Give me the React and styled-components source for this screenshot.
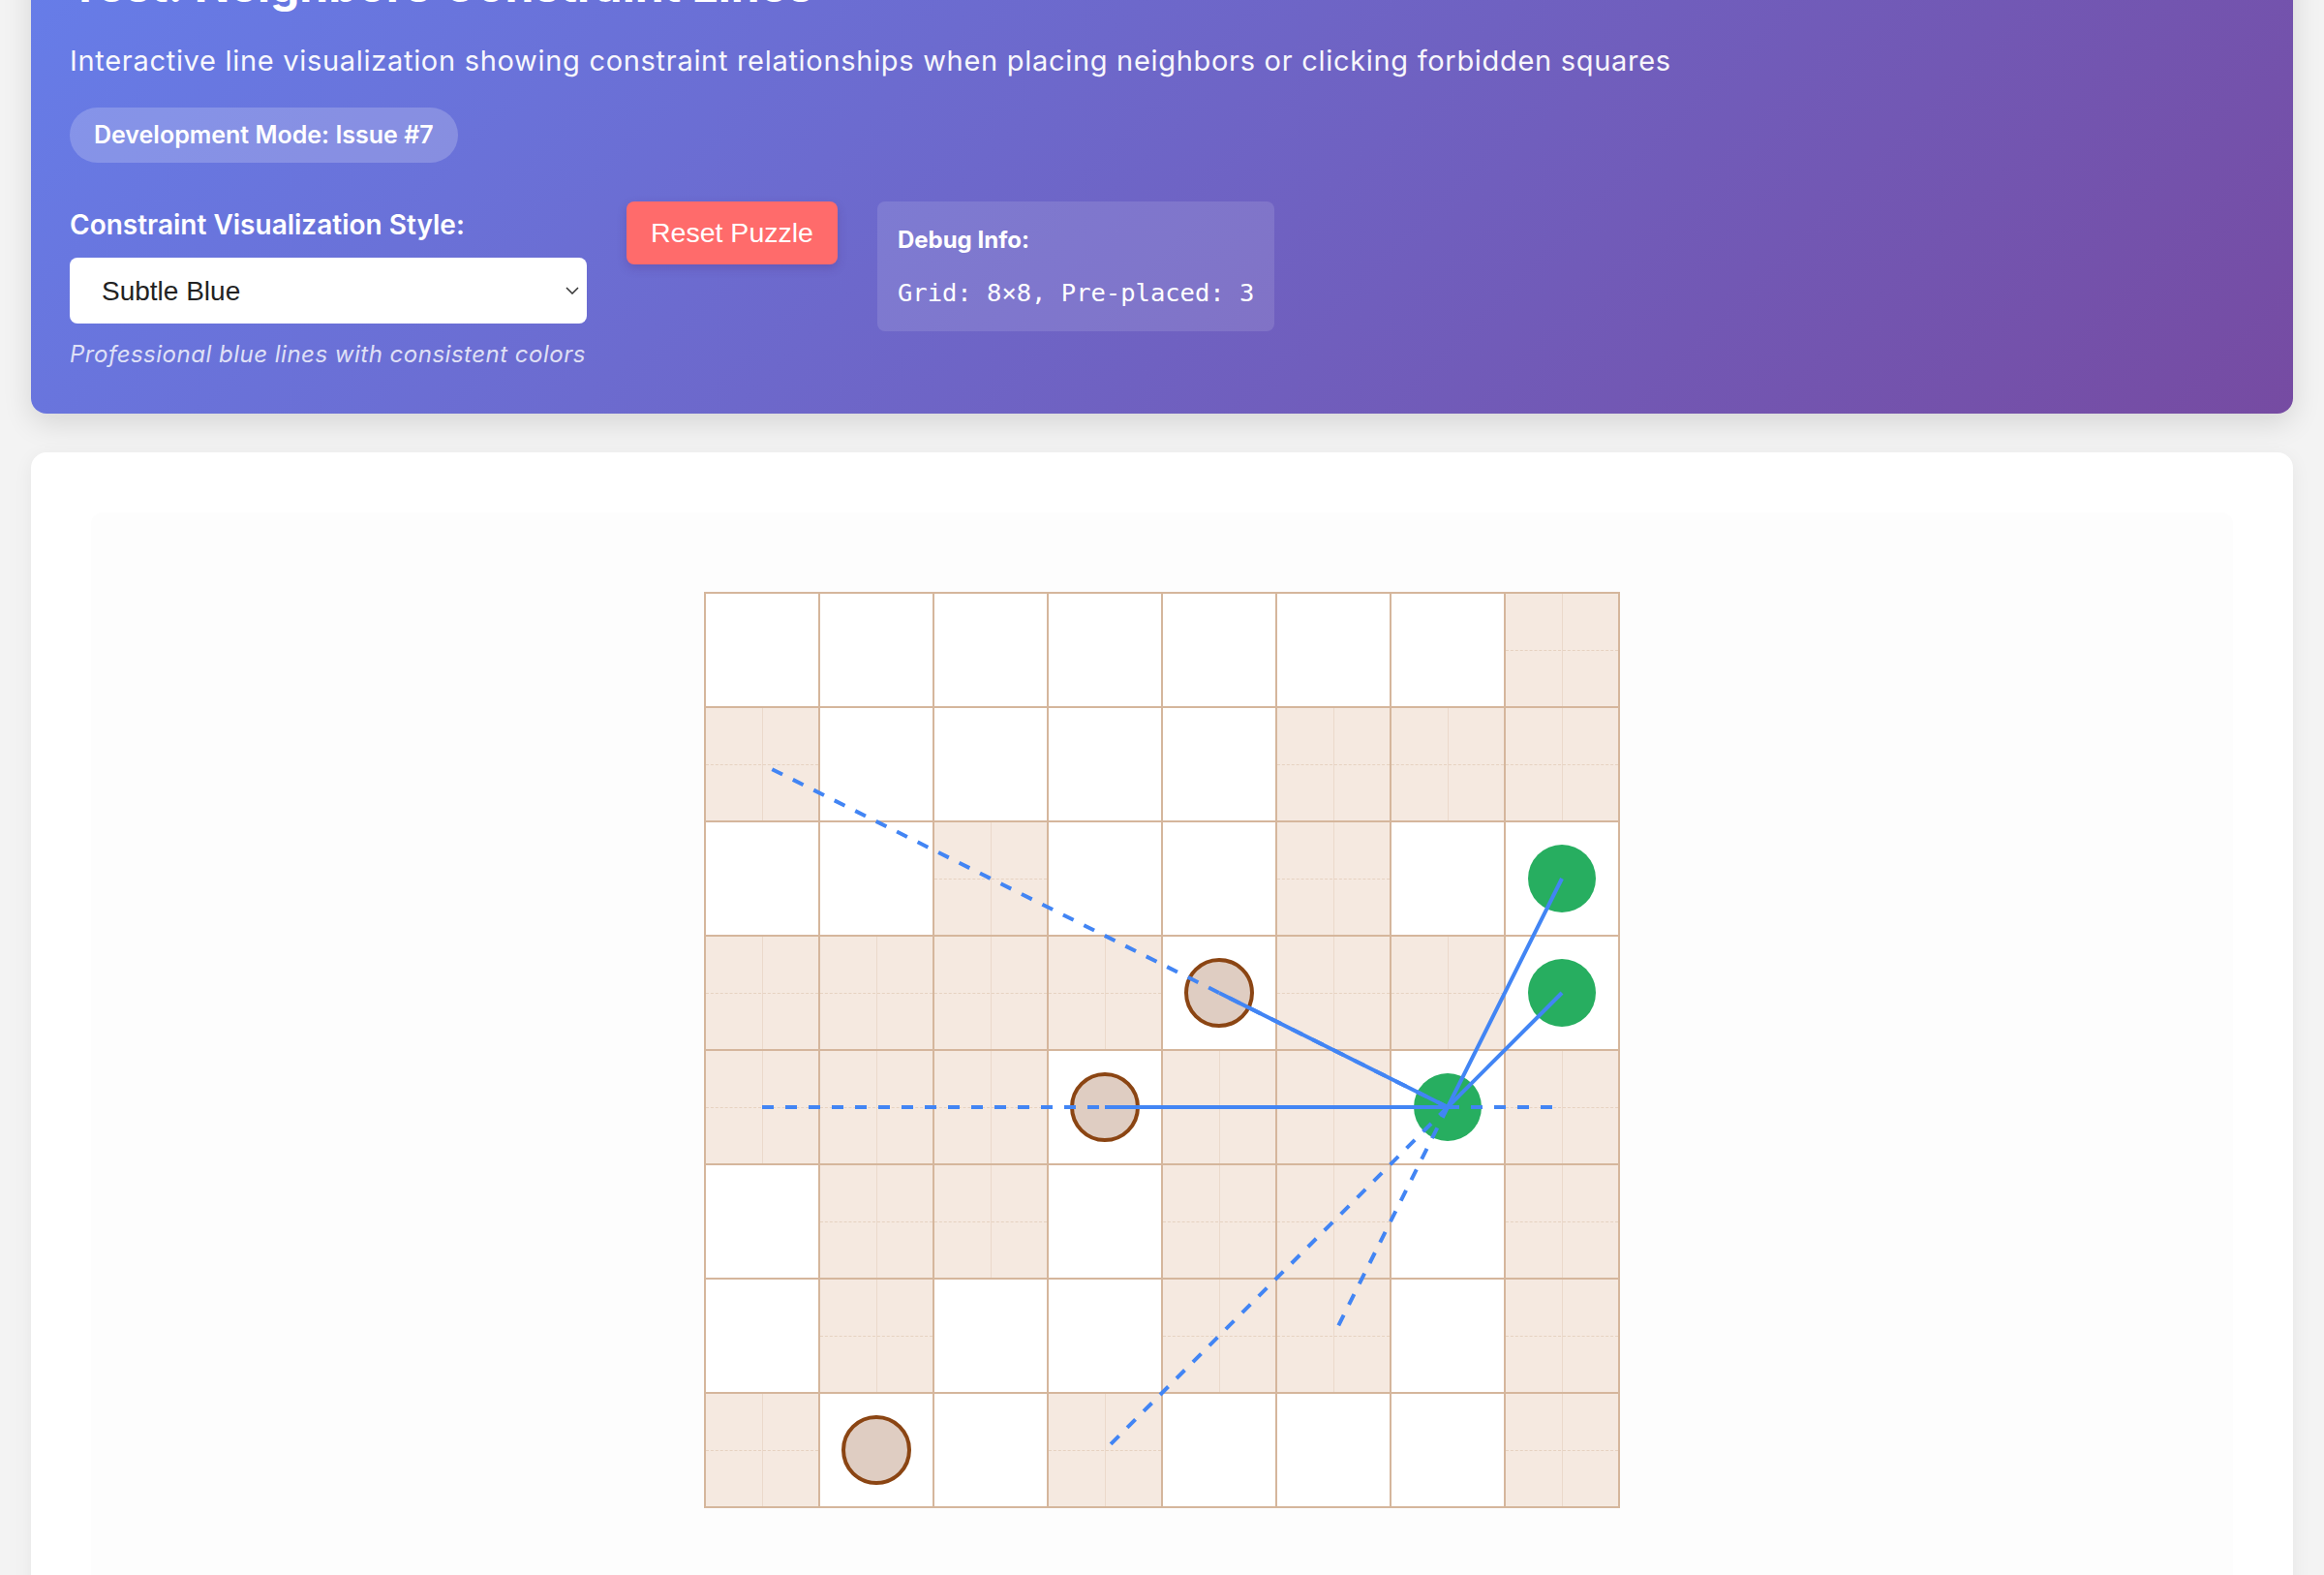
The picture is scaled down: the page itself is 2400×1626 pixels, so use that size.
import React from "react";
import { styled, createGlobalStyle } from "styled-components";

const GlobalStyle = createGlobalStyle`
  body {
    margin: 0;
    background: #f3f3f3;
    font-family: Inter, "Noto Sans", sans-serif;
  }
`;

const Page = styled.div`
  padding: 0 32px 40px;
  margin-top: -84px;
`;

const Header = styled.header`
  background: linear-gradient(135deg, #667eea 0%, #764ba2 100%);
  color: #fff;
  border-radius: 16px;
  padding: 40px 40px 43px;
  box-shadow: 0 10px 30px rgba(0, 0, 0, 0.12);
`;

const Title = styled.h1`
  margin: 0 0 28px;
  font-size: 48px;
  line-height: 1.2;
  font-weight: 700;
`;

const Subtitle = styled.p`
  margin: 0 0 27px;
  font-size: 29px;
  letter-spacing: 0.7px;
  line-height: 42px;
  opacity: 0.95;
`;

const Badge = styled.span`
  display: inline-block;
  padding: 10px 25px;
  border-radius: 999px;
  background: rgba(255, 255, 255, 0.2);
  font-size: 25px;
  font-weight: 600;
  line-height: 1.5;
`;

const Controls = styled.div`
  display: flex;
  align-items: flex-start;
  gap: 41px;
  margin-top: 40px;
`;

const Field = styled.div`
  display: flex;
  flex-direction: column;
  width: 534px;
`;

const Label = styled.label`
  font-size: 28px;
  font-weight: 600;
  line-height: 1.75;
  margin-bottom: 9px;
`;

const SelectWrap = styled.div`
  position: relative;
`;

const Select = styled.select`
  appearance: none;
  width: 100%;
  height: 68px;
  border: none;
  border-radius: 8px;
  background: #fff;
  color: #222;
  padding: 0 60px 0 33px;
  font-family: "Liberation Sans", Arial, sans-serif;
  font-size: 28px;
`;

const Chevron = styled.svg`
  position: absolute;
  right: 8px;
  top: 50%;
  transform: translateY(-50%);
  pointer-events: none;
`;

const Hint = styled.p`
  margin: 14px 0 0;
  font-size: 24px;
  letter-spacing: 0.5px;
  font-style: italic;
  line-height: 1.5;
  color: rgba(255, 255, 255, 0.8);
`;

const ResetButton = styled.button`
  border: none;
  border-radius: 8px;
  background: #ff6b6b;
  color: #fff;
  font-family: "Liberation Sans", Arial, sans-serif;
  font-size: 28.5px;
  line-height: 33px;
  padding: 16px 25px;
  box-shadow: 0 4px 10px rgba(80, 40, 120, 0.25);
`;

const Debug = styled.div`
  background: rgba(255, 255, 255, 0.12);
  border-radius: 8px;
  padding: 22px 21px 21px;
  display: flex;
  flex-direction: column;
  gap: 17px;
`;

const DebugTitle = styled.strong`
  font-size: 24px;
  font-weight: 700;
  line-height: 36px;
`;

const DebugLine = styled.code`
  font-family: "DejaVu Sans Mono", monospace;
  font-size: 25.5px;
  line-height: 38px;
`;

const Card = styled.main`
  margin-top: 40px;
  background: #fff;
  border-radius: 16px;
  padding: 62px;
  box-shadow: 0 4px 20px rgba(0, 0, 0, 0.06);
`;

const BoardArea = styled.section`
  background: #fdfdfd;
  border-radius: 12px;
  padding: 82px 0 120px;
  display: flex;
  justify-content: center;
`;

const Board = styled.div`
  position: relative;
  display: grid;
  grid-template-columns: repeat(8, 116px);
  grid-auto-rows: 116px;
  gap: 2px;
  padding: 2px;
  background: #d5b69c;
`;

const Cell = styled.div`
  position: relative;
  display: flex;
  align-items: center;
  justify-content: center;
  background: ${({ $forbidden }) => ($forbidden ? "#f5e9e0" : "#fff")};

  ${({ $forbidden }) =>
    $forbidden &&
    `
    &::before {
      content: "";
      position: absolute;
      left: 50%;
      top: 0;
      bottom: 0;
      border-left: 1px solid rgba(213, 182, 156, 0.3);
    }
    &::after {
      content: "";
      position: absolute;
      top: 50%;
      left: 0;
      right: 0;
      border-top: 1px dashed rgba(213, 182, 156, 0.45);
    }
  `}
`;

const Piece = styled.div`
  width: ${({ $kind }) => ($kind === "fixed" ? "72px" : "70px")};
  height: ${({ $kind }) => ($kind === "fixed" ? "72px" : "70px")};
  box-sizing: border-box;
  border-radius: 50%;
  position: relative;
  z-index: 1;
  background: ${({ $kind }) => ($kind === "fixed" ? "#dfcdc2" : "#27ae60")};
  border: ${({ $kind }) => ($kind === "fixed" ? "4px solid #8b4513" : "none")};
`;

const Overlay = styled.svg`
  position: absolute;
  inset: 0;
  pointer-events: none;
  z-index: 2;
`;

const forbidden = [
  "00000001",
  "10000111",
  "00100100",
  "11110110",
  "11101101",
  "01101101",
  "01001101",
  "10010001",
];

const pieces = {
  "3-4": "fixed",
  "4-3": "fixed",
  "7-1": "fixed",
  "2-7": "placed",
  "3-7": "placed",
  "4-6": "placed",
};

const center = (r, c) => [60 + 118 * c, 60 + 118 * r];

const origin = [4, 6];
const dashedTo = [
  [1, 0],
  [4, 0],
  [4, 7],
  [6, 5],
  [7, 3],
];
const solidTo = [
  [3, 4],
  [4, 3],
  [2, 7],
  [3, 7],
];

const App = () => {
  const [ox, oy] = center(...origin);
  return (
    <>
      <GlobalStyle />
      <Page>
        <Header>
          <Title>Test: Neighbors Constraint Lines</Title>
          <Subtitle>
            Interactive line visualization showing constraint relationships
            when placing neighbors or clicking forbidden squares
          </Subtitle>
          <Badge>Development Mode: Issue #7</Badge>
          <Controls>
            <Field>
              <Label htmlFor="style">Constraint Visualization Style:</Label>
              <SelectWrap>
                <Select id="style" defaultValue="subtle">
                  <option value="subtle">Subtle Blue</option>
                  <option value="vivid">Vivid Rainbow</option>
                  <option value="mono">Monochrome</option>
                </Select>
                <Chevron width="14" height="8" viewBox="0 0 14 8">
                  <path
                    d="M1 1l6 6 6-6"
                    fill="none"
                    stroke="#333"
                    strokeWidth="1.5"
                  />
                </Chevron>
              </SelectWrap>
              <Hint>Professional blue lines with consistent colors</Hint>
            </Field>
            <ResetButton>Reset Puzzle</ResetButton>
            <Debug>
              <DebugTitle>Debug Info:</DebugTitle>
              <DebugLine>Grid: 8×8, Pre-placed: 3</DebugLine>
            </Debug>
          </Controls>
        </Header>

        <Card>
          <BoardArea>
            <Board>
              {forbidden.map((row, r) =>
                row.split("").map((v, c) => (
                  <Cell key={`${r}-${c}`} $forbidden={v === "1"}>
                    {pieces[`${r}-${c}`] && (
                      <Piece $kind={pieces[`${r}-${c}`]} />
                    )}
                  </Cell>
                ))
              )}
              <Overlay viewBox="0 0 946 946" width="946" height="946">
                {dashedTo.map(([r, c]) => {
                  const [x, y] = center(r, c);
                  return (
                    <line
                      key={`d${r}${c}`}
                      x1={ox}
                      y1={oy}
                      x2={x}
                      y2={y}
                      stroke="#4285f4"
                      strokeWidth="4"
                      strokeDasharray="12 12"
                    />
                  );
                })}
                {solidTo.map(([r, c]) => {
                  const [x, y] = center(r, c);
                  return (
                    <line
                      key={`s${r}${c}`}
                      x1={ox}
                      y1={oy}
                      x2={x}
                      y2={y}
                      stroke="#4285f4"
                      strokeWidth="4"
                    />
                  );
                })}
              </Overlay>
            </Board>
          </BoardArea>
        </Card>
      </Page>
    </>
  );
};

export default App;
